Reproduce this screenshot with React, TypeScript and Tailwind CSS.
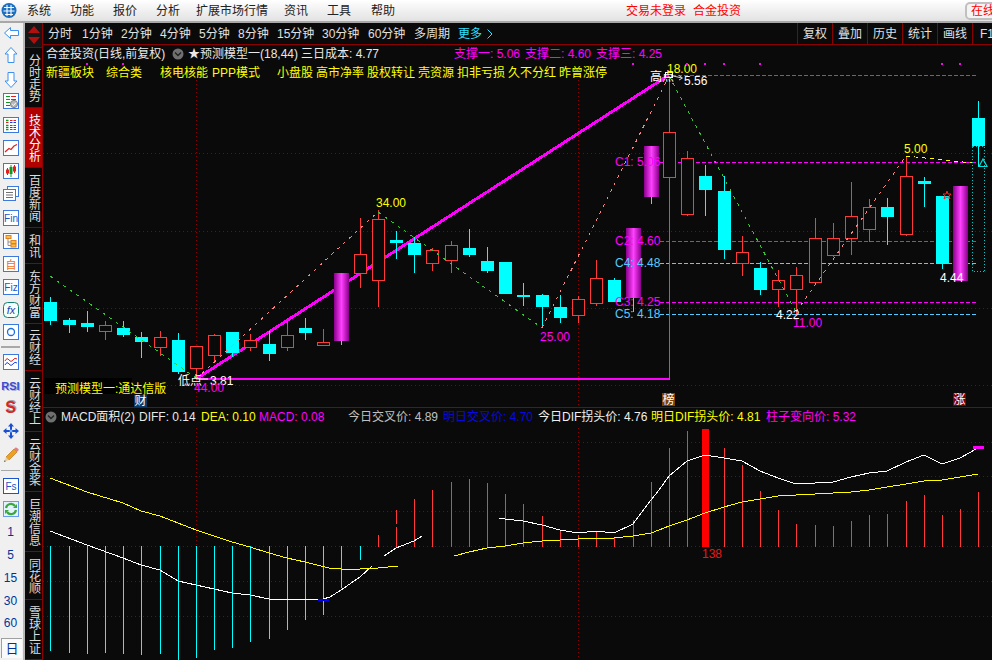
import React from "react";

type C = [number, number, number, number, number, "r" | "c"];
const candles: C[] = [
  [50, 297, 302, 321, 325, "c"], [69, 318, 320, 325, 333, "c"], [87, 311, 323, 327, 332, "c"], [105, 321, 325, 331, 340, "r"],
  [123, 321, 328, 335, 337, "c"], [141, 332, 337, 342, 358, "c"], [160, 331, 337, 347, 356, "r"], [178, 333, 340, 372, 374, "c"],
  [196, 346, 346, 368, 377, "r"], [214, 334, 335, 355, 361, "r"], [232, 332, 332, 353, 357, "c"], [250, 334, 340, 347, 351, "r"],
  [269, 331, 344, 354, 361, "c"], [287, 321, 335, 347, 351, "r"], [305, 318, 328, 333, 340, "c"], [323, 329, 342, 345, 345, "r"],
  [360, 218, 254, 273, 288, "r"], [378, 210, 219, 280, 307, "r"], [396, 231, 240, 243, 259, "c"], [414, 237, 243, 255, 273, "c"],
  [432, 248, 250, 263, 271, "r"], [451, 241, 245, 260, 273, "r"], [469, 229, 248, 255, 257, "c"], [487, 247, 261, 271, 273, "c"],
  [505, 262, 262, 294, 294, "c"], [523, 283, 295, 297, 306, "c"], [542, 294, 295, 307, 328, "c"], [560, 295, 307, 318, 323, "c"],
  [578, 296, 299, 315, 323, "r"], [596, 260, 278, 303, 306, "r"], [614, 278, 280, 302, 302, "c"], [669, 76, 132, 177, 198, "r"],
  [687, 151, 158, 214, 216, "r"], [705, 165, 176, 190, 216, "c"], [724, 176, 191, 250, 259, "c"], [742, 236, 252, 263, 276, "r"],
  [760, 262, 268, 290, 295, "c"], [778, 270, 280, 289, 307, "r"], [796, 267, 275, 289, 315, "r"], [815, 218, 238, 282, 282, "r"],
  [833, 223, 238, 255, 257, "r"], [851, 182, 216, 238, 255, "r"], [869, 199, 207, 229, 242, "r"], [887, 198, 207, 217, 245, "c"],
  [906, 156, 176, 234, 236, "r"], [924, 177, 181, 184, 207, "c"], [942, 196, 196, 264, 269, "c"], [978, 101, 118, 146, 167, "c"],
];
const magentaBars: [number, number, number, number][] = [
  [334, 273, 341, 345], [626, 228, 298, 312], [644, 146, 197, 204], [953, 186, 281, 281],
];
const cyanBars: [number, number][] = [
  [50, 650], [69, 652], [87, 653], [105, 652], [123, 653], [141, 654], [160, 653], [178, 660], [196, 657], [214, 649], [232, 647],
  [250, 641], [269, 638], [287, 629], [305, 619], [323, 614], [341, 587], [360, 559],
];
const redBars: [number, number][] = [
  [378, 534], [414, 498], [432, 489], [451, 481], [469, 478], [487, 482], [505, 493], [523, 503], [542, 515], [560, 529], [578, 534],
  [596, 531], [614, 537], [633, 519], [651, 481], [669, 447], [687, 430], [724, 447], [742, 464], [760, 490], [778, 509], [796, 523],
  [815, 524], [833, 525], [851, 520], [869, 514], [887, 513], [906, 500], [924, 494], [942, 514], [960, 508], [978, 491],
];
const difA = "50,530 87,544 123,557 141,564 160,569 178,580 196,584 214,588 232,592 250,594 269,598 287,598 305,598 317,599 323,598 330,596 341,589 360,576 372,565";
const difB = "384,555 396,547 414,540 422,535";
const difC = "499,517 505,518 523,520 542,524 560,529 578,532 596,530 614,532 633,523 651,499 659,489 669,475 687,460 705,454 724,457 742,460 760,470 778,477 796,483 815,482 833,481 851,476 869,472 887,470 906,461 924,454 942,463 960,457 978,447";
const deaA = "50,477 87,491 123,502 141,510 160,515 178,522 196,529 214,535 232,541 250,546 269,552 287,557 305,561 329,567 341,568 360,568 378,567 398,565";
const deaB = "454,555 469,551 487,547 505,545 523,542 542,540 560,539 578,538 596,537 614,537 633,535 651,532 659,529 669,525 687,519 705,512 724,506 742,501 760,498 778,495 796,494 815,493 833,492 851,491 869,489 887,486 906,483 924,480 942,479 960,476 978,473";

const RED = "#ff3838";
const CYAN = "#00ffff";
const GRID = "#8b0000";

function Grid({ ys, vFrom, vTo }: { ys: number[]; vFrom: number; vTo: number }) {
  return (
    <g stroke={GRID} strokeDasharray="1 3" shapeRendering="crispEdges">
      {ys.map((y) => <line key={y} x1={43} x2={992} y1={y} y2={y} />)}
      <line x1={196.5} x2={196.5} y1={vFrom} y2={vTo} />
      <line x1={578.5} x2={578.5} y1={vFrom} y2={vTo} />
    </g>
  );
}

function Box({ children, stroke = "#3b78e0" }: { children?: React.ReactNode; stroke?: string }) {
  return (
    <svg width="16" height="16" viewBox="0 0 16 16" className="shrink-0">
      <rect x="0.5" y="0.5" width="15" height="15" fill="#fff" stroke={stroke} />
      {children}
    </svg>
  );
}

function Slot({ m, children }: { m: string; children: React.ReactNode }) {
  return <div className={`h-[16px] pr-[2px] flex items-center justify-center ${m}`}>{children}</div>;
}

const arrowProps = { fill: "#fff", stroke: "#3b90f0", strokeWidth: 1 };

function LeftBar() {
  const boxText = { fontSize: 10, fill: "#1a55cc", textAnchor: "middle" as const };
  return (
    <div className="w-[25px] shrink-0 h-[637px] bg-[#f0f0f0] border-r-[2px] border-r-[#b8b8b8] flex flex-col overflow-hidden">
      <Slot m="mt-[2px]">
        <svg width="16" height="14" viewBox="0 0 16 14"><path d="M1.5 7 L7.5 1.5 V4.5 H15.5 V9.5 H7.5 V12.5 Z" {...arrowProps} /></svg>
      </Slot>
      <Slot m="mt-[6px]">
        <svg width="14" height="16" viewBox="0 0 14 16"><path d="M7 .5 L13 7 H10 V15.5 H4 V7 H1 Z" {...arrowProps} /></svg>
      </Slot>
      <Slot m="mt-[9px]">
        <svg width="14" height="16" viewBox="0 0 14 16"><path d="M7 15.5 L13 9 H10 V.5 H4 V9 H1 Z" {...arrowProps} /></svg>
      </Slot>
      <Slot m="mt-[5px]">
        <Box>
          <path d="M3 3.5H7M3 6.5H7M3 9.5H7" stroke="#0a9a20" />
          <path d="M8 3.5H13M8 6.5H13" stroke="#e02020" />
          <path d="M3 12.5H7" stroke="#e02020" />
          <circle cx="11" cy="11" r="3.6" fill="#b8b8b8" stroke="#808080" />
          <path d="M9.2 11 L10.6 12.4 L13 9.6" fill="none" stroke="#fff" />
        </Box>
      </Slot>
      <Slot m="mt-[8px]">
        <Box>
          <path d="M3 3.5H5.5M3 8.5H5.5M3 12.5H5.5" stroke="#0a9a20" strokeWidth="1.4" />
          <path d="M3 5.5H5.5M3 10.5H5.5M7 3.5H9.5M7 8.5H9.5M7 12.5H9.5" stroke="#e02020" />
          <path d="M7 5.5H9.5M7 10.5H9.5M10.5 5.5H13M10.5 10.5H13" stroke="#1040e0" />
          <path d="M10.5 3.5H13M10.5 8.5H13M10.5 12.5H13" stroke="#e02020" />
        </Box>
      </Slot>
      <Slot m="mt-[7px]">
        <Box><path d="M2 12 L6 8.5 L8 9.5 L11 6 L14 4.5" fill="none" stroke="#e02020" strokeWidth="1.2" /></Box>
      </Slot>
      <Slot m="mt-[7px]">
        <Box>
          <path d="M4.5 5V12" stroke="#e02020" /><rect x="3" y="6.5" width="3" height="4" fill="#e02020" />
          <path d="M8 2V14" stroke="#0a9a20" /><rect x="6.5" y="4" width="3" height="7" fill="#0a9a20" />
          <path d="M11.5 2V10" stroke="#e02020" /><rect x="10" y="3.5" width="3" height="5" fill="#e02020" />
        </Box>
      </Slot>
      <Slot m="mt-[7px]">
        <svg width="16" height="16" viewBox="0 0 16 16">
          <rect x="4.5" y="0.5" width="11" height="10" fill="#fff" stroke="#3b78e0" />
          <rect x="0.5" y="3.5" width="12" height="11" fill="#fff" stroke="#3b78e0" />
          <path d="M3 6.5H10M3 9H10M3 11.5H10" stroke="#707070" />
        </svg>
      </Slot>
      <Slot m="mt-[8px]">
        <Box><text x="8" y="12" {...boxText}>Fin</text></Box>
      </Slot>
      <Slot m="mt-[7px]">
        <Box>
          <rect x="3" y="2.5" width="5" height="3" fill="#ffc040" stroke="#e08020" />
          <path d="M5 5.5V12.5H8M5 9H8" fill="none" stroke="#909090" />
          <rect x="8" y="7.5" width="5" height="3" fill="#ffc040" stroke="#e08020" />
          <rect x="8" y="11" width="5" height="3" fill="#ffc040" stroke="#e08020" />
        </Box>
      </Slot>
      <Slot m="mt-[7px]">
        <Box><text x="8" y="12.5" fontSize="11" fill="#f07010" textAnchor="middle">自</text></Box>
      </Slot>
      <Slot m="mt-[7px]">
        <Box><text x="8" y="12" {...boxText}>Fiz</text></Box>
      </Slot>
      <Slot m="mt-[7px]">
        <svg width="16" height="16" viewBox="0 0 16 16">
          <rect x="0.5" y="0.5" width="15" height="15" rx="4" fill="#f4fff8" stroke="#108070" />
          <text x="8" y="12" fontSize="11" fontStyle="italic" fill="#2040c0" textAnchor="middle">fx</text>
        </svg>
      </Slot>
      <Slot m="mt-[6px]">
        <Box><circle cx="8" cy="8" r="3.5" fill="none" stroke="#1a70e0" strokeWidth="1.3" /></Box>
      </Slot>
      <Slot m="-mt-[1px]"><div className="w-[19px] h-[2px] bg-[#a8a8a8]" /></Slot>
      <Slot m="-mt-[1px]">
        <Box>
          <path d="M2 7 Q4 3 6 6 T10 6 T14 5" fill="none" stroke="#e02020" />
          <path d="M2 11 Q4 7 6 10 T10 10 T14 9" fill="none" stroke="#2040e0" />
        </Box>
      </Slot>
      <Slot m="mt-[8px]">
        <span className="text-[11px] leading-none font-bold text-[#3a4ccc] [text-shadow:1px_1px_0_#b0b0e0]">RSI</span>
      </Slot>
      <Slot m="mt-[6px]">
        <span className="text-[16px] leading-none font-bold text-[#d02828] [text-shadow:1px_-1px_0_#a0a0a0]">S</span>
      </Slot>
      <Slot m="mt-[7px]">
        <svg width="16" height="16" viewBox="0 0 16 16">
          <path d="M8 0L11 3.5H5ZM8 16L11 12.5H5ZM0 8L3.5 5V11ZM16 8L12.5 5V11Z" fill="#1a50d0" />
          <path d="M8 3V13M3 8H13" stroke="#1a50d0" strokeWidth="2" />
          <circle cx="8" cy="8" r="1.5" fill="#80b0ff" />
        </svg>
      </Slot>
      <Slot m="mt-[8px]">
        <svg width="16" height="16" viewBox="0 0 16 16">
          <path d="M3 10 L11 2 L14 5 L6 13 Z" fill="#f0a020" stroke="#b06a10" strokeWidth=".6" />
          <path d="M11 2 L12.5 .6 Q13.5 0 15.4 2 Q16 3 15.4 3.6 L14 5 Z" fill="#e08080" />
          <path d="M3 10 L1 15 L6 13 Z" fill="#e8d0a0" />
          <path d="M1 15 L1.7 13.2 L2.8 14.3 Z" fill="#404040" />
        </svg>
      </Slot>
      <Slot m="-mt-[1px]"><div className="w-[19px] h-[1px] bg-[#a8a8a8]" /></Slot>
      <Slot m="mt-0">
        <Box stroke="#1a55cc"><text x="8" y="12" {...boxText}>Fs</text></Box>
      </Slot>
      <Slot m="mt-[7px]">
        <Box stroke="#6a9af0">
          <rect x="1" y="1" width="14" height="14" fill="#e4f2ff" />
          <path d="M3 7 A5 5 0 0 1 12 5 M13 9 A5 5 0 0 1 4 11" fill="none" stroke="#3aa83a" strokeWidth="2.2" />
          <path d="M10 7H14V3ZM6 9H2V13Z" fill="#3aa83a" />
        </Box>
      </Slot>
      {["1", "5", "15", "30"].map((t) => (
        <Slot key={t} m="mt-[7px]"><span className="text-[12px] leading-none text-[#003399]">{t}</span></Slot>
      ))}
      <Slot m="mt-[6px]"><span className="text-[12px] leading-none text-[#003399]">60</span></Slot>
      <div className="mt-[7px] ml-[1px] w-[21px] h-[20px] bg-[#fafafa] border-t-[1px] border-l-[1px] border-t-[#a0a0a0] border-l-[#a0a0a0] flex items-center justify-center text-[13px] leading-none text-[#003399]">日</div>
    </div>
  );
}

const tabs: [string, string, boolean][] = [
  ["分时走势", "h-[60px]", false],
  ["技术分析", "h-[60px]", true],
  ["百度新闻", "h-[60px]", false],
  ["和讯", "h-[36px]", false],
  ["东方财富", "h-[60px]", false],
  ["云财经", "h-[47px]", false],
  ["云财经上", "h-[61px]", false],
  ["云财金桨", "h-[60px]", false],
  ["巨潮信息", "h-[60px]", false],
  ["同花顺", "h-[48px]", false],
  ["雪球上证", "h-[60px]", false],
];

function Tabs() {
  return (
    <div className="w-[18px] shrink-0 flex flex-col border-r border-r-[#8b0000] bg-[#0a0a0a]">
      <div className="h-[25px] shrink-0 bg-[#161616] border-b border-b-[#8b0000] flex items-center justify-center">
        <svg width="14" height="20" viewBox="0 0 14 20">
          <path d="M7 1 L13 8 H1 Z" fill="#b01010" />
          <path d="M7 19 L13 12 H1 Z" fill="#b01010" />
        </svg>
      </div>
      {tabs.map(([t, h, on]) => (
        <div
          key={t}
          className={`${h} shrink-0 flex items-center justify-center border-b border-b-[#8b0000] text-[12px] leading-[12px] [writing-mode:vertical-rl] ${on ? "bg-[#b00000] text-white" : "text-[#dcdcdc]"}`}
        >
          {t}
        </div>
      ))}
    </div>
  );
}

function TopBar() {
  const items: [string, string][] = [
    ["系统", "ml-[9px]"], ["功能", "ml-[19px]"], ["报价", "ml-[19px]"], ["分析", "ml-[19px]"],
    ["扩展市场行情", "ml-[16px]"], ["资讯", "ml-[16px]"], ["工具", "ml-[19px]"], ["帮助", "ml-[20px]"],
  ];
  return (
    <div className="h-[23px] shrink-0 flex items-center bg-gradient-to-b from-[#ffffff] to-[#e2e2e2] border-b-[2px] border-b-[#a8a8a8] overflow-hidden">
      <div className="w-[626px] shrink-0 flex items-center text-[12px] text-[#222]">
        <svg width="18" height="18" viewBox="0 0 18 18" className="shrink-0">
          <circle cx="9" cy="8.5" r="7.5" fill="#1d6fc0" />
          <path d="M4 5.5H14M3.5 9H14.5M5 12.5H13M7 3V14M11 3V14" stroke="#fff" strokeWidth="1.1" fill="none" />
        </svg>
        {items.map(([t, m]) => <span key={t} className={`${m} whitespace-nowrap`}>{t}</span>)}
      </div>
      <div className="w-[339px] shrink-0 text-[12px] text-[#ff0000] whitespace-nowrap">
        交易未登录<span className="ml-[7px]">合金投资</span>
      </div>
      <div className="w-[40px] shrink-0 h-[18px] pl-[4px] rounded-[5px] border-[2px] border-[#c0c0c0] bg-[#f4f4f4] text-[12px] leading-[14px] text-[#ff0000] whitespace-nowrap">在线</div>
    </div>
  );
}

function Periods() {
  const left: [string, string][] = [
    ["分时", "w-[34px]"], ["1分钟", "w-[39px]"], ["2分钟", "w-[39px]"], ["4分钟", "w-[39px]"], ["5分钟", "w-[39px]"], ["8分钟", "w-[39px]"],
    ["15分钟", "w-[45px]"], ["30分钟", "w-[46px]"], ["60分钟", "w-[46px]"], ["多周期", "w-[44px]"],
  ];
  const right = ["复权", "叠加", "历史", "统计", "画线"];
  return (
    <div className="h-[22px] shrink-0 flex items-stretch bg-[#0a0a0a] border-b border-b-[#8b0000] text-[12px] text-[#e0e0e0] overflow-hidden">
      <div className="w-[754px] shrink-0 flex items-center pl-[5px]">
        {left.map(([t, w]) => <span key={t} className={`${w} whitespace-nowrap`}>{t}</span>)}
        <span className="text-[#30e0ff]">更多</span>
        <svg width="8" height="12" viewBox="0 0 8 12" className="ml-[4px]"><path d="M1.5 1.5 L6 6 L1.5 10.5" fill="none" stroke="#30e0ff" /></svg>
      </div>
      {right.map((t) => (
        <div key={t} className="w-[35px] shrink-0 flex items-center justify-center border-l border-l-[#8b0000]">{t}</div>
      ))}
      <div className="flex-1 flex items-center pl-[7px] border-l border-l-[#8b0000] whitespace-nowrap">F1</div>
    </div>
  );
}

function DownCircle() {
  return (
    <svg width="12" height="12" viewBox="0 0 12 12" className="shrink-0">
      <circle cx="6" cy="6" r="5.5" fill="#707070" />
      <path d="M3 4.5 L6 7.5 L9 4.5" fill="none" stroke="#222" strokeWidth="1.4" />
    </svg>
  );
}

function MainChart() {
  const t = { fontSize: 12 };
  const levels: [number, string, number][] = [
    [75.5, "#ff00ff", 672], [162.5, "#ff00ff", 660], [241.5, "#ff00ff", 660], [263.5, "#55ccff", 660], [302.5, "#ff00ff", 660], [314.5, "#55ccff", 660],
  ];
  return (
    <svg className="absolute inset-0" width="949" height="362" viewBox="43 45 949 362">
      <defs>
        <linearGradient id="mg" x1="0" x2="1" y1="0" y2="0">
          <stop offset="0" stopColor="#8a008a" />
          <stop offset="0.5" stopColor="#ff40ff" />
          <stop offset="1" stopColor="#8a008a" />
        </linearGradient>
      </defs>
      <Grid ys={[153.5, 231.5, 308.5, 385.5]} vFrom={80} vTo={407} />
      <g shapeRendering="crispEdges">
        {levels.map(([y, c, x]) => <line key={y} x1={x} x2={978} y1={y} y2={y} stroke={c} strokeDasharray="4 2" />)}
        <line x1={196} x2={669} y1={379} y2={75} stroke="#ff00ff" strokeWidth={3} />
        <rect x={196} y={378} width={474} height={2} fill="#ff00ff" />
        <line x1={669.5} x2={669.5} y1={198} y2={380} stroke="#c040c0" />
        {candles.map(([x, hi, top, bot, lo, k], i) => (
          k === "c" ? (
            <g key={i}>
              <line x1={x + 0.5} x2={x + 0.5} y1={hi} y2={lo} stroke={CYAN} />
              <rect x={x - 6} y={top} width={13} height={bot - top} fill={CYAN} />
            </g>
          ) : (
            <g key={i}>
              <line x1={x + 0.5} x2={x + 0.5} y1={hi} y2={lo} stroke={RED} />
              <rect x={x - 5.5} y={top + 0.5} width={12} height={bot - top} fill="#0a0a0a" stroke={RED} />
            </g>
          )
        ))}
        {magentaBars.map(([x, top, bot, lo], i) => (
          <g key={i}>
            <line x1={x + 7.5} x2={x + 7.5} y1={bot} y2={lo} stroke="#ff80ff" />
            <rect x={x} y={top} width={15} height={bot - top} fill="url(#mg)" />
          </g>
        ))}
        <rect x={972.5} y={146.5} width={12} height={125} fill="none" stroke="#00c8c8" strokeDasharray="1 2" />
        <polyline points="50,276 196,378" fill="none" stroke="#32c832" strokeDasharray="3 5" />
        <polyline points="378,212 542,328" fill="none" stroke="#32c832" strokeDasharray="3 5" />
        <polyline points="669,76 796,312" fill="none" stroke="#32c832" strokeDasharray="3 5" />
        <polyline points="196,379 378,212" fill="none" stroke="#ff8080" strokeDasharray="3 5" />
        <polyline points="542,328 669,76" fill="none" stroke="#ff8080" strokeDasharray="3 5" />
        <polyline points="796,312 906,156" fill="none" stroke="#ff8080" strokeDasharray="3 5" />
        <polyline points="906,156 972,163" fill="none" stroke="#ffff00" strokeDasharray="4 4" />
      </g>
      <path d="M979 166.5 L983 159 L987 166.5 Z" fill="none" stroke="#00e0e0" strokeWidth="1.2" />
      <path d="M947 191 L948 194 L951 194 L949 196 L950 199 L947 197 L944 199 L945 196 L943 194 L946 194 Z" fill="none" stroke="#ff2020" />
      <rect x="665.5" y="72.5" width="7" height="5" fill="none" stroke="#fff" />
      <path d="M673 76 L682 78 M679 75.5 L682.5 78 L679 80" fill="none" stroke="#d0d0d0" />
      <path d="M200 379 L208 379" stroke="#fff" />
      <rect x="43" y="378" width="89" height="16" fill="#000" />
      <g {...t}>
        <text x="376" y="207" fill="#ffff00">34.00</text>
        <text x="540" y="341" fill="#ff00ff">25.00</text>
        <text x="793" y="327" fill="#ff00ff">11.00</text>
        <text x="776" y="319" fill="#ffffff">4.22</text>
        <text x="940" y="282" fill="#ffffff">4.44</text>
        <text x="904" y="153" fill="#ffff00">5.00</text>
        <text x="667" y="73" fill="#ffff00">18.00</text>
        <text x="684" y="85" fill="#ffffff">5.56</text>
        <text x="650" y="81" fill="#ffffff">高点</text>
        <text x="178" y="385" fill="#ffffff">低点</text>
        <text x="210" y="385" fill="#ffffff">3.81</text>
        <text x="194" y="392" fill="#ff00ff">44.00</text>
        <text x="55" y="393" fill="#ffff00">预测模型一:通达信版</text>
        <text x="615" y="166" fill="#ff00ff">C1: 5.06</text>
        <text x="615" y="245" fill="#ff00ff">C2: 4.60</text>
        <text x="615" y="267" fill="#55ccff">C4: 4.48</text>
        <text x="615" y="306" fill="#ff00ff">C3: 4.25</text>
        <text x="615" y="318" fill="#55ccff">C5: 4.18</text>
      </g>
      <rect x="134" y="395" width="13" height="12" fill="#0a3a6a" />
      <text x="140.5" y="405" fontSize="12" fill="#fff" textAnchor="middle">财</text>
      <rect x="662" y="393" width="13" height="13" fill="#804000" />
      <text x="668.5" y="404" fontSize="12" fill="#fff" textAnchor="middle">榜</text>
      <rect x="953" y="393" width="13" height="13" fill="#800000" />
      <text x="959.5" y="404" fontSize="12" fill="#fff" textAnchor="middle">涨</text>
      <g fill="#ff00ff" shapeRendering="crispEdges">
        {[87, 123, 633, 687, 705, 724, 760, 942, 960].map((x) => <rect key={x} x={x - 1} y={63} width={2} height={2} />)}
      </g>
    </svg>
  );
}

function MacdChart() {
  return (
    <svg className="absolute inset-0" width="949" height="253" viewBox="43 407 949 253">
      <Grid ys={[441.5, 475.5, 510.5, 545.5, 580.5, 615.5]} vFrom={427} vTo={660} />
      <g shapeRendering="crispEdges">
        {cyanBars.map(([x, y]) => <line key={x} x1={x + 0.5} x2={x + 0.5} y1={545} y2={y} stroke={CYAN} />)}
        {redBars.map(([x, y]) => <line key={x} x1={x + 0.5} x2={x + 0.5} y1={546} y2={y} stroke={RED} />)}
        <line x1={396.5} x2={396.5} y1={546} y2={526} stroke={RED} />
        <line x1={396.5} x2={396.5} y1={523} y2={509} stroke={RED} />
        <rect x={702} y={428} width={7} height={118} fill="#ff0000" />
        <g fill="none" stroke="#ffffff">
          <polyline points={difA} /><polyline points={difB} /><polyline points={difC} />
        </g>
        <g fill="none" stroke="#ffff00">
          <polyline points={deaA} /><polyline points={deaB} />
        </g>
        <rect x={318} y={598} width={11} height={2} fill="#0000ff" />
        <rect x={973} y={445} width={11} height={3} fill="#ff00ff" />
      </g>
      <text x="702" y="557" fontSize="12" fill="#e81818">138</text>
    </svg>
  );
}

export default function App() {
  const tags: [string, string][] = [
    ["新疆板块", "w-[60px]"], ["综合类", "w-[54px]"], ["核电核能", "w-[52px]"], ["PPP模式", "w-[65px]"], ["小盘股", "w-[39px]"],
    ["高市净率", "w-[51px]"], ["股权转让", "w-[51px]"], ["壳资源", "w-[39px]"], ["扣非亏损", "w-[51px]"], ["久不分红", "w-[51px]"], ["昨曾涨停", "w-[51px]"],
  ];
  return (
    <div className="w-[992px] h-[660px] overflow-hidden flex flex-col bg-[#0a0a0a] font-['Liberation_Sans','Noto_Sans_CJK_SC',sans-serif]">
      <TopBar />
      <div className="flex-1 min-h-0 flex">
        <LeftBar />
        <Tabs />
        <div className="w-[949px] shrink-0 flex flex-col">
          <Periods />
          <div className="h-[362px] shrink-0 relative overflow-hidden text-[12px]">
            <MainChart />
            <div className="relative h-[18px] flex items-center pl-[3px] whitespace-nowrap text-[#e8e8e8]">
              <span className="w-[126px]">合金投资(日线,前复权)</span>
              <DownCircle />
              <span className="ml-[4px] w-[113px]">★预测模型一(18,44)</span>
              <span className="w-[153px]">三日成本: 4.77</span>
              <span className="w-[71px] text-[#ff00ff]">支撑一: 5.06</span>
              <span className="w-[71px] text-[#ff00ff]">支撑二: 4.60</span>
              <span className="text-[#ff00ff]">支撑三: 4.25</span>
            </div>
            <div className="relative mt-[1px] h-[18px] flex items-center pl-[3px] whitespace-nowrap text-[#ffff00]">
              {tags.map(([t, w]) => <span key={t} className={w}>{t}</span>)}
            </div>
          </div>
          <div className="flex-1 relative overflow-hidden border-t border-t-[#8b0000] text-[12px]">
            <MacdChart />
            <div className="relative h-[18px] flex items-center pl-[2px] whitespace-nowrap">
              <DownCircle />
              <span className="ml-[4px] w-[78px] text-[#e8e8e8]">MACD面积(2)</span>
              <span className="w-[62px] text-[#e8e8e8]">DIFF: 0.14</span>
              <span className="w-[58px] text-[#ffff00]">DEA: 0.10</span>
              <span className="w-[89px] text-[#ff00ff]">MACD: 0.08</span>
              <span className="w-[95px] text-[#c0c0c0]">今日交叉价: 4.89</span>
              <span className="w-[95px] text-[#0808e0]">明日交叉价: 4.70</span>
              <span className="w-[113px] text-[#f0f0f0]">今日DIF拐头价: 4.76</span>
              <span className="w-[115px] text-[#ffff00]">明日DIF拐头价: 4.81</span>
              <span className="text-[#ff00ff]">柱子变向价: 5.32</span>
            </div>
          </div>
        </div>
      </div>
    </div>
  );
}
